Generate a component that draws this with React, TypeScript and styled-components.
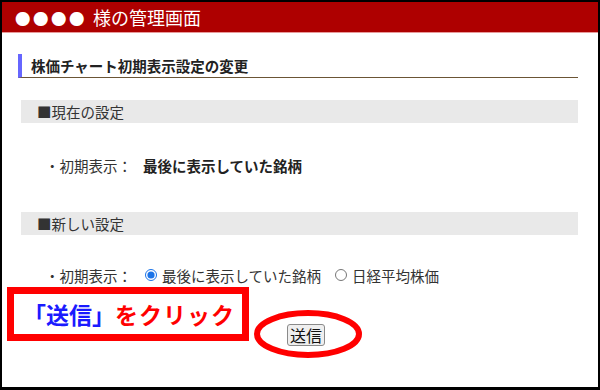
import React from "react";
import styled, { createGlobalStyle } from "styled-components";

const GlobalStyle = createGlobalStyle`
  html, body {
    margin: 0;
    padding: 0;
    background: #ffffff;
  }
  * {
    box-sizing: border-box;
  }
`;

const Frame = styled.div`
  position: relative;
  width: 600px;
  height: 390px;
  border: 2px solid #000;
  border-bottom-width: 3px;
  background: #fff;
  overflow: hidden;
  font-family: "Noto Sans CJK JP", "Noto Sans", sans-serif;
  color: #222;
`;

const Header = styled.header`
  height: 31px;
  background: #ae0000;
  border-bottom: 1px solid #e89a9a;
  color: #fff;
  font-size: 18px;
  line-height: 30px;
  padding-left: 13px;
  white-space: pre;
`;

const Dots = styled.span`
  font-size: 15.5px;
  letter-spacing: 2.5px;
  margin-right: 6px;
`;

const Main = styled.main`
  padding: 0 20px 0 16px;
`;

const Heading = styled.h2`
  margin: 21px 0 0;
  height: 24px;
  border-left: 4px solid #6666ff;
  border-bottom: 1px solid #6b5535;
  padding-left: 9px;
  font-size: 14.5px;
  font-weight: bold;
  line-height: 23px;
  color: #222;
`;

const SectionBar = styled.div<{ $top: number }>`
  margin: ${(p) => p.$top}px 0 0 3px;
  height: 23px;
  background: #e9e9e9;
  padding-left: 16px;
  font-size: 14.5px;
  line-height: 23px;
  color: #333;
`;

const SettingRow = styled.div<{ $top: number }>`
  margin-top: ${(p) => p.$top}px;
  padding-left: 27px;
  height: 20px;
  display: flex;
  align-items: center;
  font-size: 14.5px;
  color: #333;
  white-space: nowrap;
`;

const Label = styled.span`
  margin-right: 11px;
`;

const CurrentValue = styled.span`
  font-weight: bold;
  color: #222;
  font-size: 14.5px;
`;

const RadioLabel = styled.label`
  display: flex;
  align-items: center;
  margin-right: 12px;
`;

const Radio = styled.input`
  width: 12px;
  height: 12px;
  margin: 0 5px 0 2px;
  accent-color: #1a73e8;
`;

const ButtonRow = styled.div`
  margin-top: 38px;
  display: flex;
  justify-content: center;
  padding-left: 16px;
`;

const ButtonWrap = styled.div`
  position: relative;
`;

const SubmitButton = styled.button`
  height: 22px;
  padding: 0 2px;
  border: 1px solid #8a8a8a;
  border-radius: 3px;
  background: #efefef;
  font-family: "Noto Sans CJK JP", sans-serif;
  font-size: 16px;
  line-height: 20px;
  color: #111;
`;

const Ellipse = styled.svg`
  position: absolute;
  left: -34px;
  top: -14px;
  pointer-events: none;
`;

const Callout = styled.div`
  position: absolute;
  left: 5px;
  top: 285px;
  width: 242px;
  height: 54px;
  border: 7px solid #ff0000;
  background: #fff;
  display: flex;
  align-items: center;
  padding-left: 9px;
  font-size: 23px;
  font-weight: bold;
  white-space: nowrap;
`;

const Blue = styled.span`
  color: #1a1aff;
`;

const Red = styled.span`
  color: #ff0000;
  letter-spacing: 1px;
`;

const App: React.FC = () => {
  return (
    <>
      <GlobalStyle />
      <Frame>
        <Header>
          <Dots>●●●●</Dots>様の管理画面
        </Header>
        <Main>
          <Heading>株価チャート初期表示設定の変更</Heading>
          <SectionBar $top={22}>■現在の設定</SectionBar>
          <SettingRow $top={32}>
            <Label>・初期表示：</Label>
            <CurrentValue>最後に表示していた銘柄</CurrentValue>
          </SettingRow>
          <SectionBar $top={37}>■新しい設定</SectionBar>
          <SettingRow $top={30}>
            <Label>・初期表示：</Label>
            <RadioLabel>
              <Radio type="radio" name="initial" defaultChecked />
              最後に表示していた銘柄
            </RadioLabel>
            <RadioLabel>
              <Radio type="radio" name="initial" />
              日経平均株価
            </RadioLabel>
          </SettingRow>
          <ButtonRow>
            <ButtonWrap>
              <SubmitButton type="button">送信</SubmitButton>
              <Ellipse width="110" height="50" viewBox="0 0 110 50">
                <ellipse
                  cx="55"
                  cy="25"
                  rx="51"
                  ry="21"
                  fill="none"
                  stroke="#ff0000"
                  strokeWidth="6"
                />
              </Ellipse>
            </ButtonWrap>
          </ButtonRow>
        </Main>
        <Callout>
          <Blue>「送信」</Blue>
          <Red>をクリック</Red>
        </Callout>
      </Frame>
    </>
  );
};

export default App;
